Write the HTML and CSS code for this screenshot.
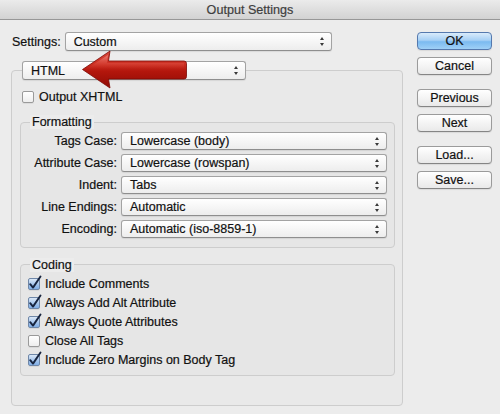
FILE: index.html
```html
<!DOCTYPE html>
<html>
<head>
<meta charset="utf-8">
<title>Output Settings</title>
<link rel="stylesheet" href="styles.css">
</head>
<body>
<div class="window">
  <div class="titlebar">Output Settings</div>
  <div class="dialog">
    <div class="main">
      <div class="settings-row">
        <span class="lbl">Settings:</span>
        <div class="popup popup-settings"><span>Custom</span><span class="updown"></span></div>
      </div>
      <div class="group outer">
        <div class="popup popup-format"><span>HTML</span><span class="updown"></span></div>
        <div class="check check-xhtml"><span class="box"></span><span>Output XHTML</span></div>

        <div class="group inner formatting">
          <div class="group-title">Formatting</div>
          <div class="form-grid">
            <span class="flabel">Tags Case:</span>
            <div class="popup popup-row"><span>Lowercase (body)</span><span class="updown"></span></div>
            <span class="flabel">Attribute Case:</span>
            <div class="popup popup-row"><span>Lowercase (rowspan)</span><span class="updown"></span></div>
            <span class="flabel">Indent:</span>
            <div class="popup popup-row"><span>Tabs</span><span class="updown"></span></div>
            <span class="flabel">Line Endings:</span>
            <div class="popup popup-row"><span>Automatic</span><span class="updown"></span></div>
            <span class="flabel">Encoding:</span>
            <div class="popup popup-row"><span>Automatic (iso-8859-1)</span><span class="updown"></span></div>
          </div>
        </div>

        <div class="group inner coding">
          <div class="group-title">Coding</div>
          <div class="check-list">
            <div class="check"><span class="box checked"><svg viewBox="0 0 12 12" class="tick"><path d="M2.2 6.2 L5 9.6 L12.5 -1.5"/></svg></span><span>Include Comments</span></div>
            <div class="check"><span class="box checked"><svg viewBox="0 0 12 12" class="tick"><path d="M2.2 6.2 L5 9.6 L12.5 -1.5"/></svg></span><span>Always Add Alt Attribute</span></div>
            <div class="check"><span class="box checked"><svg viewBox="0 0 12 12" class="tick"><path d="M2.2 6.2 L5 9.6 L12.5 -1.5"/></svg></span><span>Always Quote Attributes</span></div>
            <div class="check"><span class="box"></span><span>Close All Tags</span></div>
            <div class="check"><span class="box checked"><svg viewBox="0 0 12 12" class="tick"><path d="M2.2 6.2 L5 9.6 L12.5 -1.5"/></svg></span><span>Include Zero Margins on Body Tag</span></div>
          </div>
        </div>
      </div>
    </div>
    <div class="buttons">
      <div class="btn default">OK</div>
      <div class="btn">Cancel</div>
      <div class="btn sep">Previous</div>
      <div class="btn">Next</div>
      <div class="btn sep">Load...</div>
      <div class="btn">Save...</div>
    </div>
  </div>
  <svg class="arrow" width="110" height="44" viewBox="0 0 110 44">
    <defs>
      <linearGradient id="ag" x1="0" y1="0" x2="0" y2="1">
        <stop offset="0" stop-color="#d84a3e"/>
        <stop offset="0.35" stop-color="#cc2f22"/>
        <stop offset="0.55" stop-color="#b3160c"/>
        <stop offset="1" stop-color="#8f0b05"/>
      </linearGradient>
      <linearGradient id="hl" x1="0" y1="0" x2="0" y2="1">
        <stop offset="0" stop-color="#f08a80" stop-opacity="0.8"/>
        <stop offset="1" stop-color="#e0463a" stop-opacity="0"/>
      </linearGradient>
    </defs>
    <path d="M2.5 21.5 L30 3 L28.5 13 L104 13 Q106.5 13 106.5 15.5 L106.5 28.5 Q106.5 31 104 31 L28.5 31 L30 40 Z" fill="url(#ag)" stroke="#7c0904" stroke-width="0.8"/>
    <path d="M8 20 L28 7 L27 15 L104 15 L104 21 L8 21 Z" fill="url(#hl)"/>
  </svg>
</div>
</body>
</html>
```
FILE: styles.css
```css
html, body {
  margin: 0;
  padding: 0;
}
body {
  width: 500px;
  height: 414px;
  overflow: hidden;
  background: #ececec;
  font-family: "Liberation Sans", Arial, sans-serif;
  font-size: 12.5px;
  color: #111111;
  -webkit-text-stroke: 0.2px currentColor;
}
.window {
  position: relative;
  width: 500px;
  height: 414px;
  background: #ececec;
}
.titlebar {
  height: 19px;
  line-height: 20px;
  text-align: center;
  color: #3e3e3e;
  font-size: 12.6px;
  background: linear-gradient(#ebebeb, #d2d2d2);
  border-bottom: 1px solid #979797;
}
.dialog {
  display: flex;
  padding: 12px 0 0 11px;
}
.main {
  width: 392px;
}
.settings-row {
  display: flex;
  align-items: center;
  height: 19px;
}
.lbl {
  margin-left: 1px;
}
.popup {
  box-sizing: border-box;
  display: flex;
  align-items: center;
  justify-content: space-between;
  height: 19px;
  padding: 0 6px 0 8px;
  border: 1px solid #a3a3a3;
  border-bottom-color: #8e8e8e;
  border-radius: 3px;
  background: linear-gradient(#ffffff, #f6f6f6 50%, #ededed);
  box-shadow: 0 1px 1px rgba(0,0,0,0.08);
}
.popup-settings {
  width: 267px;
  margin-left: 4px;
}
.popup-format {
  width: 224px;
  margin: -10px 0 0 2px;
}
.popup-row {
  height: 18px;
  width: 266px;
}
.updown {
  position: relative;
  width: 5px;
  height: 9px;
}
.updown::before, .updown::after {
  content: "";
  position: absolute;
  left: 0;
  border-left: 2.5px solid transparent;
  border-right: 2.5px solid transparent;
}
.updown::before {
  top: 0;
  border-bottom: 3px solid #3a3a3a;
}
.updown::after {
  bottom: 0;
  border-top: 3px solid #3a3a3a;
}
.group {
  box-sizing: border-box;
  border: 1px solid #cdcdcd;
  border-radius: 4px;
  background: rgba(0,0,0,0.012);
}
.outer {
  margin-top: 19px;
  height: 336px;
  padding: 0 7px 0 8px;
}
.check {
  display: flex;
  align-items: center;
  gap: 5px;
}
.check-xhtml {
  height: 14px;
  margin: 10px 0 0 2px;
}
.box {
  position: relative;
  box-sizing: border-box;
  width: 12px;
  height: 12px;
  flex: none;
  border: 1px solid #9a9a9a;
  border-radius: 2px;
  background: linear-gradient(#ffffff, #eeeeee);
  box-shadow: 0 1px 0 rgba(0,0,0,0.06);
}
.box.checked {
  border-color: #6f87a8;
  background: linear-gradient(#dbe8f7, #a9c8ee 50%, #80aee6);
}
.tick {
  position: absolute;
  left: -1px;
  top: -1px;
  width: 12px;
  height: 12px;
  overflow: visible;
}
.tick path {
  fill: none;
  stroke: #17243f;
  stroke-width: 1.9;
  stroke-linecap: round;
  stroke-linejoin: round;
}
.inner {
  width: 375px;
}
.group-title {
  width: fit-content;
  height: 14px;
  line-height: 14px;
  padding: 0 2px;
  margin-left: 9px;
  background: #ececec;
}
.formatting {
  margin-top: 18px;
  padding: 0 7px 9px 0;
}
.formatting .group-title {
  margin-top: -8px;
}
.form-grid {
  display: grid;
  grid-template-columns: 96px 266px;
  column-gap: 4px;
  row-gap: 4px;
  margin-top: 3px;
  align-items: center;
}
.flabel {
  text-align: right;
}
.coding {
  margin-top: 16px;
  padding: 0 7px 6px 7px;
}
.coding .group-title {
  margin-top: -7px;
  margin-left: 2px;
}
.check-list {
  margin-top: 2px;
}
.check-list .check {
  height: 19px;
}
.buttons {
  display: flex;
  flex-direction: column;
  margin-left: 14px;
}
.btn {
  box-sizing: border-box;
  width: 75px;
  height: 18px;
  line-height: 16px;
  text-align: center;
  border: 1px solid #9b9b9b;
  border-bottom-color: #858585;
  border-radius: 4px;
  background: linear-gradient(#ffffff, #f4f4f4 50%, #e9e9e9);
  box-shadow: 0 1px 1px rgba(0,0,0,0.08);
  margin-bottom: 7px;
}
.btn.sep {
  margin-top: 7px;
}
.btn.default {
  border-color: #5579ae;
  background: linear-gradient(#d9ebfb, #a7d0f5 45%, #7bbaf0 55%, #9fd0f7);
}
.arrow {
  position: absolute;
  left: 80px;
  top: 48px;
}
```
